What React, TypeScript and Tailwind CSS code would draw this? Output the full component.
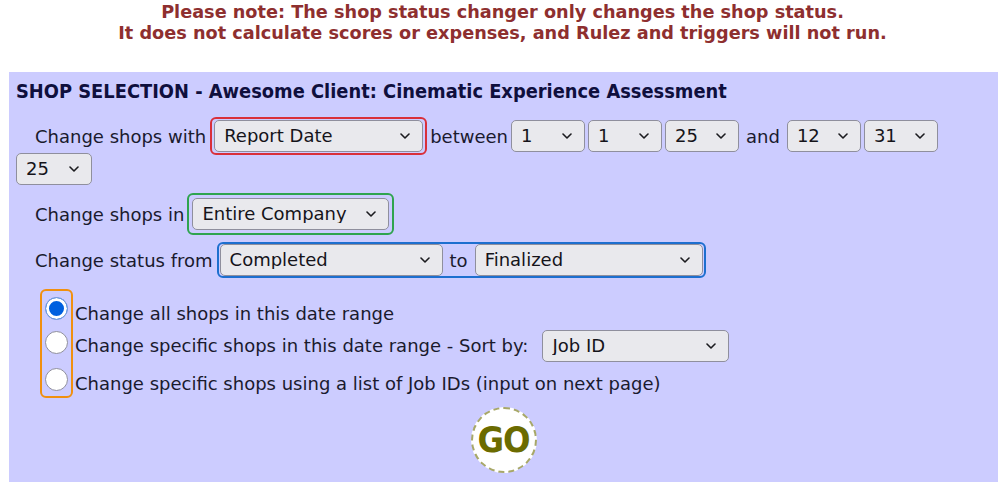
import { useState } from 'react'

function Chevron() {
  return (
    <svg className="pointer-events-none absolute right-[13px] top-1/2 -translate-y-1/2" width="10" height="6" viewBox="0 0 10 6" fill="none">
      <path d="M1 1l4 4 4-4" stroke="#1b1b1f" strokeWidth="1.6" strokeLinecap="round" strokeLinejoin="round" />
    </svg>
  )
}

function Select({ value, options, className }: { value: string; options: string[]; className: string }) {
  return (
    <span className={`relative inline-flex shrink-0 ${className}`}>
      <select
        defaultValue={value}
        className="h-full w-full appearance-none rounded-[5px] border border-[#8f8f9d] bg-[#e9e9ed] pl-[9px] pr-[26px] text-[18px] leading-none text-[#15141a] outline-none"
      >
        {options.map(o => (
          <option key={o}>{o}</option>
        ))}
      </select>
      <Chevron />
    </span>
  )
}

function Radio({ checked, onClick, className }: { checked: boolean; onClick: () => void; className: string }) {
  return (
    <button
      type="button"
      onClick={onClick}
      className={`h-[23px] w-[23px] shrink-0 rounded-full border ${
        checked
          ? 'border-[#7f9fdc] bg-[#0060df] shadow-[inset_0_0_0_3px_white]'
          : 'border-[#8f8f9d] bg-white'
      } ${className}`}
    />
  )
}

const months = ['1', '2', '3', '4', '5', '6', '7', '8', '9', '10', '11', '12']
const days = Array.from({ length: 31 }, (_, i) => String(i + 1))
const years = ['23', '24', '25', '26']

export default function App() {
  const [mode, setMode] = useState(0)

  return (
    <div className="min-h-screen bg-white font-['DejaVu_Sans',Verdana,sans-serif] text-[18px] text-[#1a1a2e]">
      {/* notice */}
      <div className="pt-[2px] text-center text-[17.7px] font-bold leading-[21px] text-[#8e2f2f]">
        <p>Please note: The shop status changer only changes the shop status.</p>
        <p>It does not calculate scores or expenses, and Rulez and triggers will not run.</p>
      </div>

      {/* panel */}
      <div className="ml-[9px] mr-[7px] mt-[28px] bg-[#ccccff] pb-[9px] pt-[8px]">
        <h2 className="pl-[7px] font-['DejaVu_Sans_Condensed','DejaVu_Sans',sans-serif] text-[19.85px] font-bold leading-[24px] text-[#0f0f3d]">
          SHOP SELECTION - Awesome Client: Cinematic Experience Assessment
        </h2>

        {/* date row */}
        <div className="mt-[15px] flex flex-wrap items-center pl-[7px]">
          <span className="ml-[19px]">Change shops with</span>
          <span className="-my-[2px] ml-[4px] inline-flex rounded-[6px] border-2 border-[#d9303a] px-[2px] py-[1px]">
            <Select value="Report Date" options={['Report Date', 'Shop Date', 'Due Date']} className="h-[32px] w-[209px]" />
          </span>
          <span className="ml-[3px] mr-[3px]">between</span>
          <Select value="1" options={months} className="h-[32px] w-[74px]" />
          <Select value="1" options={days} className="ml-[3px] h-[32px] w-[74px]" />
          <Select value="25" options={years} className="ml-[3px] h-[32px] w-[74px]" />
          <span className="mx-[7px]">and</span>
          <Select value="12" options={months} className="h-[32px] w-[74px]" />
          <Select value="31" options={days} className="ml-[3px] h-[32px] w-[74px]" />
          <Select value="25" options={years} className="h-[32px] w-[76px]" />
        </div>

        {/* location row */}
        <div className="mt-[8px] flex items-center pl-[26px]">
          <span>Change shops in</span>
          <span className="ml-[3px] inline-flex rounded-[6px] border-2 border-[#2fa44f] px-[3px] py-[3px]">
            <Select value="Entire Company" options={['Entire Company', 'Region', 'Location']} className="h-[32px] w-[197px]" />
          </span>
        </div>

        {/* status row */}
        <div className="mt-[7px] flex items-center pl-[26px]">
          <span>Change status from</span>
          <span className="ml-[4px] inline-flex items-center rounded-[6px] border-2 border-[#1d6fcf] px-[1px]">
            <Select value="Completed" options={['Completed', 'Assigned', 'Scheduled']} className="h-[32px] w-[223px]" />
            <span className="mx-[7px]">to</span>
            <Select value="Finalized" options={['Finalized', 'Completed', 'Validated']} className="h-[32px] w-[228px]" />
          </span>
        </div>

        {/* mode radios */}
        <div className="mt-[11px] flex pl-[31px]">
          <div className="flex h-[109px] w-[33px] flex-col items-center rounded-[6px] border-2 border-[#f0900f] pt-[6px]">
            <Radio checked={mode === 0} onClick={() => setMode(0)} className="" />
            <Radio checked={mode === 1} onClick={() => setMode(1)} className="mt-[11px]" />
            <Radio checked={mode === 2} onClick={() => setMode(2)} className="mt-[14px]" />
          </div>
          <div className="ml-[2px] flex flex-col pt-[9px]">
            <div className="flex h-[30px] items-center">Change all shops in this date range</div>
            <div className="flex h-[35px] items-center">
              Change specific shops in this date range - Sort by:
              <Select value="Job ID" options={['Job ID', 'Shop Date', 'Location']} className="ml-[14px] h-[32px] w-[187px]" />
            </div>
            <div className="flex h-[40px] items-center">Change specific shops using a list of Job IDs (input on next page)</div>
          </div>
        </div>

        {/* go */}
        <div className="mt-[4px] flex justify-center">
          <button
            type="button"
            className="flex h-[66px] w-[66px] items-center justify-center rounded-full border-2 border-dashed border-[#a8a868] bg-white font-['DejaVu_Sans_Condensed','DejaVu_Sans',sans-serif] text-[36px] font-bold tracking-[-1px] text-[#6b6b00]"
          >
            GO
          </button>
        </div>
      </div>
    </div>
  )
}
